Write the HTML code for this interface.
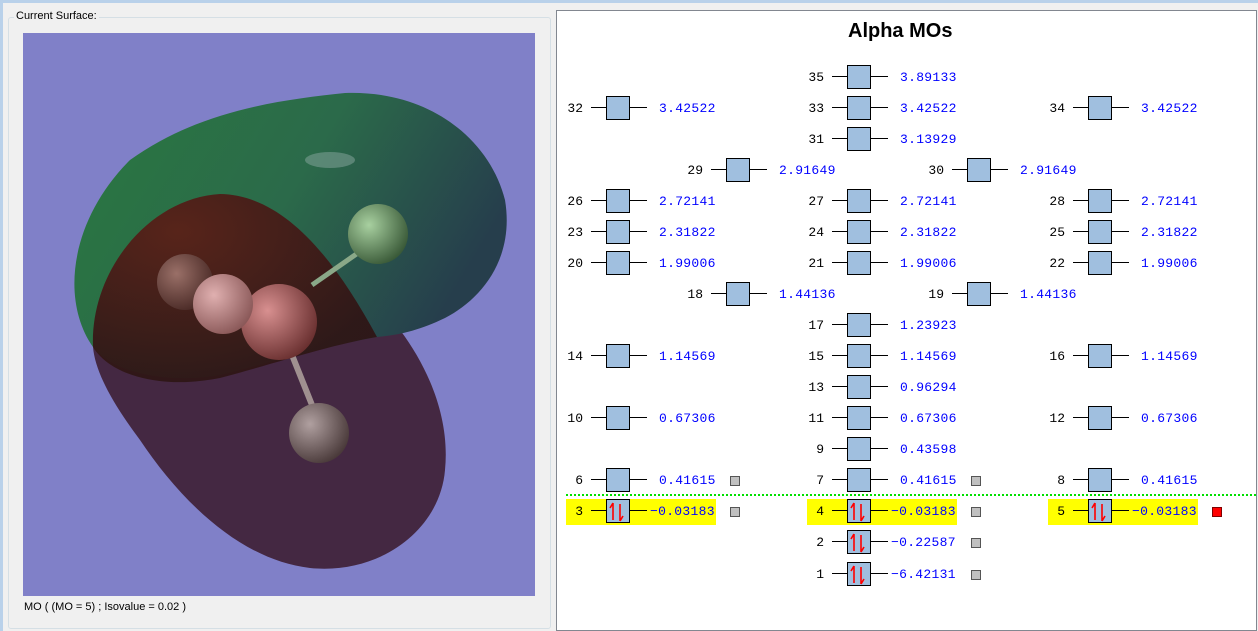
<!DOCTYPE html>
<html><head><meta charset="utf-8"><style>
*{margin:0;padding:0;box-sizing:border-box}
body{width:1258px;height:631px;overflow:hidden;background:#f0f0f0;position:relative;font-family:"Liberation Sans",sans-serif}
.a{position:absolute}
.mo{position:absolute;height:24px;width:200px;font-family:"Liberation Mono",monospace;font-size:13px}
.mo .n{position:absolute;left:0;width:37px;text-align:right;top:5px;color:#000}
.mo .l1{position:absolute;left:45px;top:11px;width:15px;height:1px;background:#000}
.mo .b{position:absolute;left:60px;top:0;width:24px;height:24px;background:#a0bfdf;border:1px solid #000}
.mo .l2{position:absolute;left:84px;top:11px;width:17px;height:1px;background:#000}
.mo .e{position:absolute;left:113px;top:5px;color:#0000ff;letter-spacing:0.3px}
.mo .e.neg{left:104px}
.sq{position:absolute;width:10px;height:10px;background:#c0c0c0;border:1px solid #555}
.hl{position:absolute;background:#ffff00;height:26px;width:150px}
</style></head><body>
<div class="a" style="left:0;top:0;width:1258px;height:3px;background:#b9d1ea"></div>
<div class="a" style="left:0;top:0;width:3px;height:631px;background:#b9d1ea"></div>
<div class="a" style="left:8px;top:17px;width:543px;height:612px;border:1px solid #d5dfe5;border-radius:3px"></div>
<div class="a" style="left:14px;top:10px;background:#f0f0f0;padding:0 2px;font-size:11px;color:#000">Current Surface:</div>
<div class="a" style="left:23px;top:33px;width:512px;height:563px;background:#8080c8;overflow:hidden">
<svg width="512" height="563" viewBox="23 33 512 563">
<defs>
<linearGradient id="gg" x1="0" y1="0" x2="1" y2="0.4"><stop offset="0" stop-color="#2a7840"/><stop offset="0.55" stop-color="#2b6a4a"/><stop offset="1" stop-color="#263e4c"/></linearGradient>
<radialGradient id="rg" cx="0.3" cy="0.2" r="0.8"><stop offset="0" stop-color="#5a2018"/><stop offset="1" stop-color="#2e1616"/></radialGradient>
<radialGradient id="s1" cx="0.35" cy="0.35" r="0.7"><stop offset="0" stop-color="#a8d0a0"/><stop offset="1" stop-color="#3a5a38"/></radialGradient>
<radialGradient id="s2" cx="0.35" cy="0.35" r="0.7"><stop offset="0" stop-color="#e0b0b0"/><stop offset="1" stop-color="#8a5858"/></radialGradient>
<radialGradient id="s3" cx="0.35" cy="0.35" r="0.7"><stop offset="0" stop-color="#d89090"/><stop offset="1" stop-color="#6a3030"/></radialGradient>
<radialGradient id="s4" cx="0.35" cy="0.35" r="0.7"><stop offset="0" stop-color="#b0a0a0"/><stop offset="1" stop-color="#4a3a3a"/></radialGradient>
<radialGradient id="s5" cx="0.35" cy="0.35" r="0.7"><stop offset="0" stop-color="#9a7068"/><stop offset="1" stop-color="#4a2a26"/></radialGradient>
</defs>
<path d="M93,347 C85,300 120,220 220,194 C300,200 350,270 400,330 C430,370 450,420 445,470 C440,530 380,575 310,568 C240,560 180,500 140,440 C110,400 95,370 93,347 Z" fill="#442842"/>
<path d="M93,347 C60,300 70,220 130,160 C200,110 280,100 345,93 C430,90 490,140 505,200 C515,260 480,300 445,318 C420,330 400,335 377,337 C330,345 280,360 220,375 C160,385 110,370 93,347 Z" fill="url(#gg)"/>
<path d="M93,347 C90,270 150,198 220,194 C280,195 330,250 377,337 C330,345 280,362 220,378 C160,390 110,375 93,347 Z" fill="url(#rg)" opacity="0.95"/>
<ellipse cx="330" cy="160" rx="25" ry="8" fill="#8aa8a0" opacity="0.5"/>
<line x1="312" y1="285" x2="365" y2="248" stroke="#8aa888" stroke-width="5"/>
<line x1="290" y1="350" x2="314" y2="410" stroke="#a09090" stroke-width="6"/>
<circle cx="378" cy="234" r="30" fill="url(#s1)"/>
<circle cx="185" cy="282" r="28" fill="url(#s5)"/>
<circle cx="279" cy="322" r="38" fill="url(#s3)"/>
<circle cx="223" cy="304" r="30" fill="url(#s2)"/>
<circle cx="319" cy="433" r="30" fill="url(#s4)"/>
</svg>
</div>
<div class="a" style="left:24px;top:601px;font-size:11px;color:#000">MO ( (MO = 5) ; Isovalue = 0.02 )</div>
<div class="a" style="left:556px;top:10px;width:701px;height:621px;background:#fff;border:1px solid #828790"></div>
<div class="a" style="left:848px;top:20px;font-size:20px;font-weight:bold;color:#000">Alpha MOs</div>
<div class="hl" style="left:566px;top:499px"></div>
<div class="hl" style="left:807px;top:499px"></div>
<div class="hl" style="left:1048px;top:499px"></div>
<div class="a" style="left:566px;top:494px;width:690px;border-top:2px dotted #00e000"></div>

<div class="mo" style="left:787px;top:65px"><span class="n">35</span><i class="l1"></i><i class="b"></i><i class="l2"></i><span class="e">3.89133</span></div>
<div class="mo" style="left:546px;top:96px"><span class="n">32</span><i class="l1"></i><i class="b"></i><i class="l2"></i><span class="e">3.42522</span></div>
<div class="mo" style="left:787px;top:96px"><span class="n">33</span><i class="l1"></i><i class="b"></i><i class="l2"></i><span class="e">3.42522</span></div>
<div class="mo" style="left:1028px;top:96px"><span class="n">34</span><i class="l1"></i><i class="b"></i><i class="l2"></i><span class="e">3.42522</span></div>
<div class="mo" style="left:787px;top:127px"><span class="n">31</span><i class="l1"></i><i class="b"></i><i class="l2"></i><span class="e">3.13929</span></div>
<div class="mo" style="left:666px;top:158px"><span class="n">29</span><i class="l1"></i><i class="b"></i><i class="l2"></i><span class="e">2.91649</span></div>
<div class="mo" style="left:907px;top:158px"><span class="n">30</span><i class="l1"></i><i class="b"></i><i class="l2"></i><span class="e">2.91649</span></div>
<div class="mo" style="left:546px;top:189px"><span class="n">26</span><i class="l1"></i><i class="b"></i><i class="l2"></i><span class="e">2.72141</span></div>
<div class="mo" style="left:787px;top:189px"><span class="n">27</span><i class="l1"></i><i class="b"></i><i class="l2"></i><span class="e">2.72141</span></div>
<div class="mo" style="left:1028px;top:189px"><span class="n">28</span><i class="l1"></i><i class="b"></i><i class="l2"></i><span class="e">2.72141</span></div>
<div class="mo" style="left:546px;top:220px"><span class="n">23</span><i class="l1"></i><i class="b"></i><i class="l2"></i><span class="e">2.31822</span></div>
<div class="mo" style="left:787px;top:220px"><span class="n">24</span><i class="l1"></i><i class="b"></i><i class="l2"></i><span class="e">2.31822</span></div>
<div class="mo" style="left:1028px;top:220px"><span class="n">25</span><i class="l1"></i><i class="b"></i><i class="l2"></i><span class="e">2.31822</span></div>
<div class="mo" style="left:546px;top:251px"><span class="n">20</span><i class="l1"></i><i class="b"></i><i class="l2"></i><span class="e">1.99006</span></div>
<div class="mo" style="left:787px;top:251px"><span class="n">21</span><i class="l1"></i><i class="b"></i><i class="l2"></i><span class="e">1.99006</span></div>
<div class="mo" style="left:1028px;top:251px"><span class="n">22</span><i class="l1"></i><i class="b"></i><i class="l2"></i><span class="e">1.99006</span></div>
<div class="mo" style="left:666px;top:282px"><span class="n">18</span><i class="l1"></i><i class="b"></i><i class="l2"></i><span class="e">1.44136</span></div>
<div class="mo" style="left:907px;top:282px"><span class="n">19</span><i class="l1"></i><i class="b"></i><i class="l2"></i><span class="e">1.44136</span></div>
<div class="mo" style="left:787px;top:313px"><span class="n">17</span><i class="l1"></i><i class="b"></i><i class="l2"></i><span class="e">1.23923</span></div>
<div class="mo" style="left:546px;top:344px"><span class="n">14</span><i class="l1"></i><i class="b"></i><i class="l2"></i><span class="e">1.14569</span></div>
<div class="mo" style="left:787px;top:344px"><span class="n">15</span><i class="l1"></i><i class="b"></i><i class="l2"></i><span class="e">1.14569</span></div>
<div class="mo" style="left:1028px;top:344px"><span class="n">16</span><i class="l1"></i><i class="b"></i><i class="l2"></i><span class="e">1.14569</span></div>
<div class="mo" style="left:787px;top:375px"><span class="n">13</span><i class="l1"></i><i class="b"></i><i class="l2"></i><span class="e">0.96294</span></div>
<div class="mo" style="left:546px;top:406px"><span class="n">10</span><i class="l1"></i><i class="b"></i><i class="l2"></i><span class="e">0.67306</span></div>
<div class="mo" style="left:787px;top:406px"><span class="n">11</span><i class="l1"></i><i class="b"></i><i class="l2"></i><span class="e">0.67306</span></div>
<div class="mo" style="left:1028px;top:406px"><span class="n">12</span><i class="l1"></i><i class="b"></i><i class="l2"></i><span class="e">0.67306</span></div>
<div class="mo" style="left:787px;top:437px"><span class="n">9</span><i class="l1"></i><i class="b"></i><i class="l2"></i><span class="e">0.43598</span></div>
<div class="mo" style="left:546px;top:468px"><span class="n">6</span><i class="l1"></i><i class="b"></i><i class="l2"></i><span class="e">0.41615</span></div>
<div class="mo" style="left:787px;top:468px"><span class="n">7</span><i class="l1"></i><i class="b"></i><i class="l2"></i><span class="e">0.41615</span></div>
<div class="mo" style="left:1028px;top:468px"><span class="n">8</span><i class="l1"></i><i class="b"></i><i class="l2"></i><span class="e">0.41615</span></div>

<svg width="0" height="0" style="position:absolute"><defs><g id="ud"><path d="M6,3 V20 M6,3 L3,8 M13,4 V21 M13,21 L16,16" stroke="#ff0000" stroke-width="1.6" fill="none"/></g></defs></svg>
<div class="mo" style="left:546px;top:499px"><span class="n">3</span><i class="l1"></i><i class="b"><svg width="22" height="22" style="position:absolute;left:0;top:0"><use href="#ud"/></svg></i><i class="l2"></i><span class="e neg">−0.03183</span></div>
<div class="mo" style="left:787px;top:499px"><span class="n">4</span><i class="l1"></i><i class="b"><svg width="22" height="22" style="position:absolute;left:0;top:0"><use href="#ud"/></svg></i><i class="l2"></i><span class="e neg">−0.03183</span></div>
<div class="mo" style="left:1028px;top:499px"><span class="n">5</span><i class="l1"></i><i class="b"><svg width="22" height="22" style="position:absolute;left:0;top:0"><use href="#ud"/></svg></i><i class="l2"></i><span class="e neg">−0.03183</span></div>
<div class="mo" style="left:787px;top:530px"><span class="n">2</span><i class="l1"></i><i class="b"><svg width="22" height="22" style="position:absolute;left:0;top:0"><use href="#ud"/></svg></i><i class="l2"></i><span class="e neg">−0.22587</span></div>
<div class="mo" style="left:787px;top:562px"><span class="n">1</span><i class="l1"></i><i class="b"><svg width="22" height="22" style="position:absolute;left:0;top:0"><use href="#ud"/></svg></i><i class="l2"></i><span class="e neg">−6.42131</span></div>

<div class="sq" style="left:730px;top:476px"></div>
<div class="sq" style="left:971px;top:476px"></div>
<div class="sq" style="left:730px;top:507px"></div>
<div class="sq" style="left:971px;top:507px"></div>
<div class="sq" style="left:1212px;top:507px;background:#ff0000;border-color:#800000"></div>
<div class="sq" style="left:971px;top:538px"></div>
<div class="sq" style="left:971px;top:570px"></div>
</body></html>
